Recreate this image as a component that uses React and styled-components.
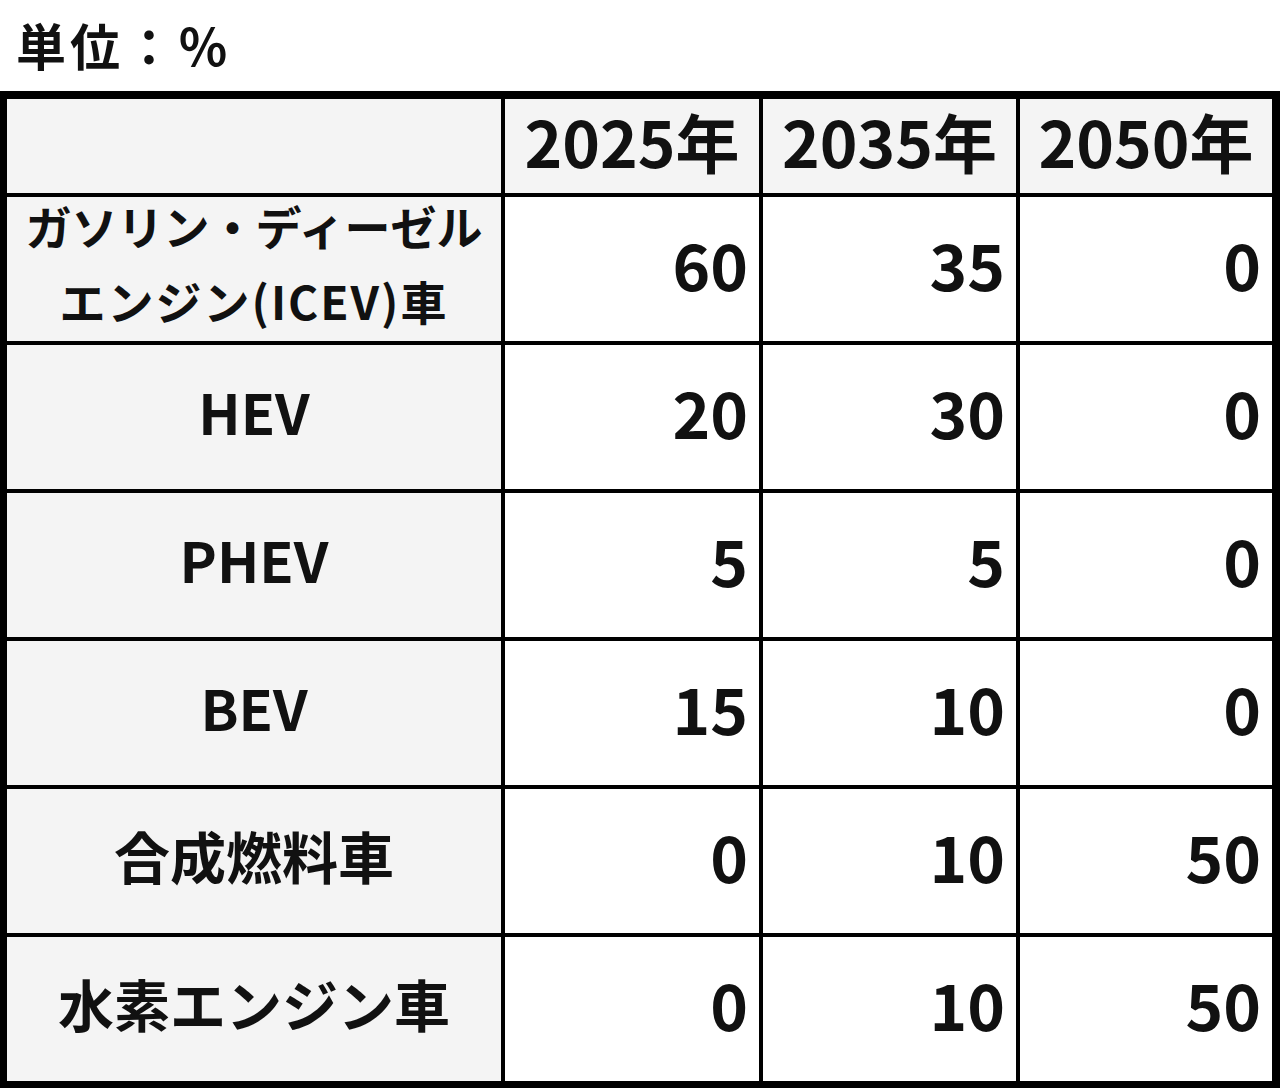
import React from 'react'
import styled, { createGlobalStyle } from 'styled-components';

const GlobalStyle = createGlobalStyle`
  body {
    margin: 0;
    background: #ffffff;
    font-family: "Noto Sans CJK JP", "Noto Sans", sans-serif;
    color: #111111;
  }
`

const years = ['2025年', '2035年', '2050年']

const rows = [
  { label: ['ガソリン・ディーゼル', 'エンジン(ICEV)車'], values: [60, 35, 0] },
  { label: ['HEV'], values: [20, 30, 0] },
  { label: ['PHEV'], values: [5, 5, 0] },
  { label: ['BEV'], values: [15, 10, 0] },
  { label: ['合成燃料車'], values: [0, 10, 50] },
  { label: ['水素エンジン車'], values: [0, 10, 50] },
]

function App() {
  return (
    <Page>
      <GlobalStyle />
      <Unit>単位：％</Unit>
      <Table>
        <HeadCell />
        {years.map(y => <HeadCell key={y}>{y}</HeadCell>)}
        {rows.map(r => (
          <React.Fragment key={r.label[0]}>
            <LabelCell small={r.label.length > 1}>
              {r.label.map((l, i) => <Line key={l} wide={i === 1}>{l}</Line>)}
            </LabelCell>
            {r.values.map((v, i) => <ValueCell key={i}>{v}</ValueCell>)}
          </React.Fragment>
        ))}
      </Table>
    </Page>
  )
}

const Page = styled.div`
  width: 1280px;
  height: 1088px;
  overflow: hidden;
`
const Unit = styled.div`
  height: 91px;
  display: flex;
  align-items: center;
  padding-left: 16px;
  padding-bottom: 4px;
  box-sizing: border-box;
  font-size: 50px;
  letter-spacing: 4px;
  font-weight: 700;
  line-height: 1;
`
const Table = styled.div`
  display: grid;
  grid-template-columns: 494px 254px 253px 252px;
  grid-template-rows: 94px repeat(6, 144px);
  gap: 4px;
  background: #000000;
  border-style: solid;
  border-color: #000000;
  border-width: 8px 8px 7px 7px;
`
const HeadCell = styled.div`
  background: #f4f4f4;
  display: flex;
  align-items: center;
  justify-content: center;
  padding-bottom: 12px;
  font-size: 64px;
  font-weight: 700;
  line-height: 1;
`
const LabelCell = styled.div`
  background: #f4f4f4;
  display: flex;
  flex-direction: column;
  align-items: center;
  justify-content: center;
  padding-bottom: 12px;
  font-size: ${p => (p.small ? '46px' : '56px')};
  line-height: ${p => (p.small ? '75px' : '1')};
  font-weight: 700;
  white-space: nowrap;
`
const Line = styled.span`
  letter-spacing: ${p => (p.wide ? '2px' : '0')};
`
const ValueCell = styled.div`
  background: #ffffff;
  display: flex;
  align-items: center;
  justify-content: flex-end;
  padding-right: 11px;
  padding-bottom: 12px;
  font-size: 64px;
  font-weight: 700;
  line-height: 1;
`

export default App
